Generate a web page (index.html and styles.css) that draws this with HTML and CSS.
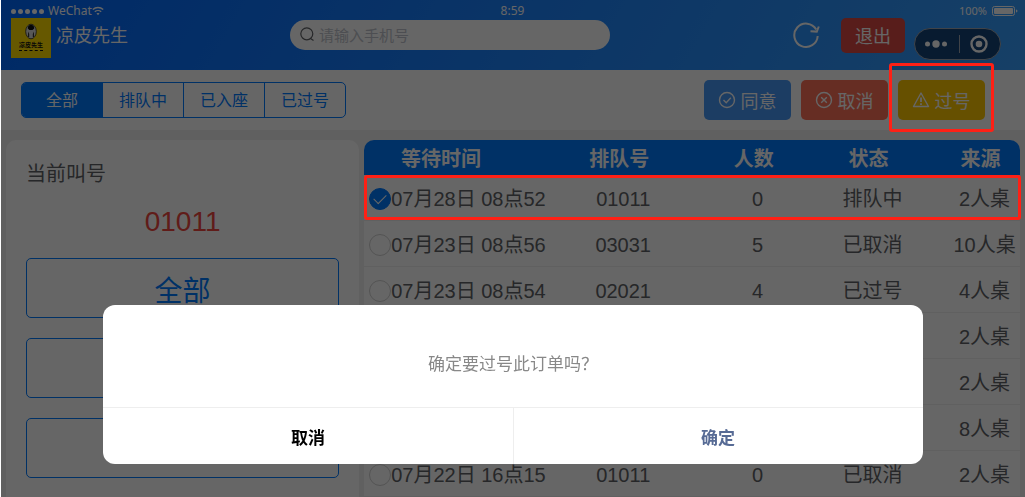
FILE: index.html
```
<!DOCTYPE html>
<html lang="zh-CN">
<head>
  <meta charset="UTF-8">
  <meta name="viewport" content="width=device-width, initial-scale=1.0">
  <title>凉皮先生</title>
  <link rel="stylesheet" href="styles.css">
</head>
<body>
  <header class="header">
    <div class="status-bar">
      <div class="carrier">
        <span class="signal"><i></i><i></i><i></i><i></i><i></i></span>
        <span>WeChat</span>
        <svg class="wifi" width="12" height="10" viewBox="0 0 12 10" fill="none" stroke="#fff" stroke-width="1.4">
          <path d="M0.8 3.6C3.8 0.8 8.2 0.8 11.2 3.6"/>
          <path d="M2.8 5.8C4.6 4.2 7.4 4.2 9.2 5.8"/>
          <path d="M4.5 7.4L6 9.2L7.5 7.4C6.6 6.8 5.4 6.8 4.5 7.4Z" fill="#fff" stroke="none"/>
        </svg>
      </div>
      <span class="clock">8:59</span>
      <div class="battery">
        <span>100%</span>
        <svg width="26" height="10" viewBox="0 0 26 10">
          <rect x="0.5" y="0.5" width="22" height="9" rx="2" fill="none" stroke="#fff"/>
          <rect x="2" y="2" width="19" height="6" rx="1" fill="#fff"/>
          <path d="M24 3.5C26 4 26 6 24 6.5Z" fill="#fff"/>
        </svg>
      </div>
    </div>

    <div class="navbar">
      <div class="brand">
        <div class="logo">
          <svg width="14" height="17" viewBox="0 0 14 17">
            <ellipse cx="7" cy="8.5" rx="5.3" ry="7.3" fill="#ddd" stroke="#111" stroke-width="0.7"/>
            <path d="M3.8 5.5C3.4 0.6 10.6 0.6 10.2 5.5L8.6 7H5.4Z" fill="#111"/>
            <path d="M4.2 8.5L5.2 11V14H4V11ZM9.8 8.5L8.8 11V14H10V11Z" fill="#333"/>
          </svg>
          <span class="logo-name">凉皮先生</span>
          <span class="logo-line"></span>
        </div>
        <span class="brand-name">凉皮先生</span>
      </div>
      <label class="search">
        <svg width="16" height="16" viewBox="0 0 16 16" fill="none" stroke="#606266" stroke-width="1.2">
          <circle cx="6.8" cy="6.8" r="6"/>
          <path d="M10.5 11.5L13.5 13.5"/>
        </svg>
        <input type="text" placeholder="请输入手机号" aria-label="请输入手机号">
      </label>
      <div class="nav-actions">
        <button class="refresh-btn" aria-label="刷新">
          <svg width="28" height="28" viewBox="0 0 28 28" fill="none" stroke="#fff" stroke-width="2">
            <path d="M23.2 7.5A11.7 11.7 0 1 0 24.7 14"/>
            <path d="M17.5 9.2L23.8 9.6L25.8 4.5"/>
          </svg>
        </button>
        <button class="exit-btn">退出</button>
      </div>
    </div>

    <div class="capsule">
      <svg width="24" height="10" viewBox="0 0 24 10" fill="#fff">
        <circle cx="3.5" cy="5" r="2.5"/>
        <circle cx="12" cy="5" r="3.7"/>
        <circle cx="20.5" cy="5" r="2.5"/>
      </svg>
      <span class="capsule-line"></span>
      <svg width="18" height="18" viewBox="0 0 18 18">
        <circle cx="9" cy="9" r="7.5" fill="none" stroke="#fff" stroke-width="2.4"/>
        <circle cx="9" cy="9" r="3.3" fill="#fff"/>
      </svg>
    </div>
  </header>

  <section class="toolbar">
    <div class="tabs">
      <button class="tab active">全部</button>
      <button class="tab">排队中</button>
      <button class="tab">已入座</button>
      <button class="tab">已过号</button>
    </div>
    <div class="actions">
      <button class="action agree">
        <svg width="18" height="18" viewBox="0 0 18 18" fill="none" stroke="#fff" stroke-width="1.4">
          <circle cx="9" cy="9" r="7.5"/>
          <path d="M5.5 9L8.2 11.7L12.8 6.8"/>
        </svg>
        同意
      </button>
      <button class="action cancel">
        <svg width="18" height="18" viewBox="0 0 18 18" fill="none" stroke="#fff" stroke-width="1.4">
          <circle cx="9" cy="9" r="7.5"/>
          <path d="M6.2 6.2L11.8 11.8M11.8 6.2L6.2 11.8"/>
        </svg>
        取消
      </button>
      <button class="action skip">
        <svg width="18" height="18" viewBox="0 0 18 18" fill="none" stroke="#fff" stroke-width="1.4" stroke-linejoin="round">
          <path d="M9 2L16.5 15.5H1.5Z"/>
          <path d="M9 6.5V11M9 12.3V14" stroke-width="1.8"/>
        </svg>
        过号
      </button>
    </div>
    <div class="mark mark-button"></div>
  </section>

  <main class="content">
    <aside class="panel">
      <h2>当前叫号</h2>
      <p class="current">01011</p>
      <div class="types">
        <button class="type-btn">全部</button>
        <button class="type-btn"></button>
        <button class="type-btn"></button>
      </div>
    </aside>

    <div class="queue">
      <table class="queue-table">
        <colgroup>
          <col class="col-time">
          <col class="col-number">
          <col class="col-people">
          <col class="col-state">
          <col class="col-source">
        </colgroup>
        <thead>
          <tr><th>等待时间</th><th>排队号</th><th>人数</th><th>状态</th><th>来源</th></tr>
        </thead>
        <tbody>
          <tr>
            <td><label><input type="radio" name="order" checked>07月28日 08点52</label></td>
            <td>01011</td><td>0</td><td>排队中</td><td>2人桌</td>
          </tr>
          <tr>
            <td><label><input type="radio" name="order">07月23日 08点56</label></td>
            <td>03031</td><td>5</td><td>已取消</td><td>10人桌</td>
          </tr>
          <tr>
            <td><label><input type="radio" name="order">07月23日 08点54</label></td>
            <td>02021</td><td>4</td><td>已过号</td><td>4人桌</td>
          </tr>
          <tr><td></td><td></td><td></td><td></td><td>2人桌</td></tr>
          <tr><td></td><td></td><td></td><td></td><td>2人桌</td></tr>
          <tr><td></td><td></td><td></td><td></td><td>8人桌</td></tr>
          <tr>
            <td><label><input type="radio" name="order">07月22日 16点15</label></td>
            <td>01011</td><td>0</td><td>已取消</td><td>2人桌</td>
          </tr>
        </tbody>
      </table>
      <div class="mark mark-row"></div>
    </div>
  </main>

  <div class="mask">
    <div class="modal" role="dialog" aria-modal="true" aria-labelledby="modalText">
      <p class="modal-text" id="modalText">确定要过号此订单吗？</p>
      <div class="modal-footer">
        <button class="modal-btn">取消</button>
        <button class="modal-btn confirm">确定</button>
      </div>
    </div>
  </div>
</body>
</html>
```
FILE: styles.css
```
* {
    box-sizing: border-box;
}
body {
    margin: 0;
    padding-left: 1px;
    min-height: 100vh;
    display: flex;
    flex-direction: column;
    font-family: "Liberation Sans", "Noto Sans CJK SC", sans-serif;
    color: #606266;
    background: linear-gradient(to right, #fff 1px, #f0f0f0 1px);
}
button {
    padding: 0;
    border: none;
    background: none;
    font-family: inherit;
    cursor: pointer;
}
h2, p {
    margin: 0;
}
svg {
    display: block;
    flex: none;
}

/* header */
.header {
    position: relative;
    height: 70px;
    color: #fff;
    background: linear-gradient(120deg, #0068ff, #38a0ff);
}
.status-bar {
    display: grid;
    grid-template-columns: 1fr auto 1fr;
    align-items: center;
    height: 18px;
    padding: 4px 7px 0 10px;
    font-family: "Noto Sans", sans-serif;
    font-size: 12px;
    line-height: 14px;
}
.clock {
    margin-right: 4px;
}
.carrier, .battery, .signal {
    display: flex;
    align-items: center;
}
.signal {
    gap: 2px;
    margin-right: 4px;
}
.signal i {
    width: 5px;
    height: 5px;
    border-radius: 50%;
    background-color: #fff;
}
.battery {
    justify-content: flex-end;
    gap: 5px;
    font-size: 11px;
}
.navbar {
    display: flex;
    align-items: flex-start;
    padding: 0 120px 0 10px;
}
.brand {
    display: flex;
    width: 279px;
}
.logo {
    display: flex;
    flex-direction: column;
    align-items: center;
    width: 40px;
    height: 40px;
    padding-top: 5px;
    background-color: #ffdc00;
    color: #111;
}
.logo-name {
    font-size: 6px;
    font-weight: bold;
    line-height: 10px;
}
.logo-line {
    width: 24px;
    border-top: 1px dashed #111;
}
.brand-name {
    margin-left: 5px;
    font-size: 18px;
    line-height: 36px;
}
.search {
    display: flex;
    align-items: center;
    width: 320px;
    height: 30px;
    margin-top: 2px;
    padding: 0 10px;
    border-radius: 15px;
    background-color: #fff;
}
.search input {
    flex: 1;
    min-width: 0;
    margin-left: 3px;
    padding: 0;
    border: none;
    outline: none;
    background: none;
    font-family: inherit;
    font-size: 15px;
}
.search input::placeholder {
    color: #c0c4cc;
}
.nav-actions {
    display: flex;
    align-items: center;
    gap: 20px;
    margin-left: auto;
}
.exit-btn {
    width: 64px;
    height: 35px;
    padding-bottom: 2px;
    border-radius: 5px;
    background-color: #dd4a44;
    color: #fff;
    font-size: 18px;
}
.capsule {
    position: absolute;
    top: 28px;
    right: 24px;
    display: flex;
    align-items: center;
    justify-content: space-between;
    width: 87px;
    height: 32px;
    padding: 0 12px 0 9px;
    border: 1px solid #a0a8b4;
    border-radius: 16px;
    background-color: #144478;
}
.capsule-line {
    height: 18px;
    border-left: 1px solid #a0a8b4;
}

/* tabs and actions */
.toolbar {
    position: relative;
    display: flex;
    align-items: center;
    justify-content: space-between;
    height: 60px;
    padding: 0 40px 0 20px;
    background-color: #fff;
}
.tabs {
    display: flex;
    width: 325px;
    height: 36px;
    border: 1px solid #007aff;
    border-radius: 5px;
    overflow: hidden;
}
.tab {
    flex: 1;
    padding-bottom: 2px;
    color: #007aff;
    font-size: 16px;
}
.tab + .tab {
    border-left: 1px solid #007aff;
}
.tab.active {
    background-color: #007aff;
    color: #fff;
}
.actions {
    display: flex;
    gap: 10px;
}
.action {
    display: flex;
    align-items: center;
    justify-content: center;
    gap: 5px;
    width: 87px;
    height: 40px;
    padding-right: 1px;
    padding-bottom: 1px;
    border-radius: 5px;
    color: #fff;
    font-size: 18px;
}
.agree {
    background-color: #4698f8;
}
.cancel {
    background-color: #ff7058;
}
.skip {
    background-color: #ffc800;
}

/* content */
.content {
    flex: 1;
    display: grid;
    grid-template-columns: 35fr 65fr;
    gap: 5px;
    padding: 10px 5px 0;
}
.panel {
    padding: 20px 20px 10px;
    border-radius: 10px 10px 0 0;
    background-color: #fff;
}
.panel h2 {
    font-size: 20px;
    font-weight: normal;
    line-height: 28px;
}
.current {
    padding: 14px 0 17px;
    color: #f04840;
    font-size: 28px;
    line-height: 39px;
    text-align: center;
}
.types {
    display: flex;
    flex-direction: column;
    gap: 20px;
}
.type-btn {
    height: 60px;
    padding-top: 2px;
    border: 1px solid #007aff;
    border-radius: 5px;
    color: #007aff;
    font-size: 28px;
}
.queue {
    position: relative;
    border-radius: 10px 10px 0 0;
    background-color: #fff;
}
.queue-table {
    width: 100%;
    table-layout: fixed;
    border-collapse: separate;
    border-spacing: 0;
    font-size: 20px;
}
.col-time { width: 30%; }
.col-number { width: 19%; }
.col-people { width: 22%; }
.col-state { width: 13%; }
.col-source { width: 16%; }
.queue-table th {
    height: 35px;
    padding: 2px 8px 0 0;
    background-color: #007aff;
    color: #fff;
    line-height: 30px;
}
.queue-table th:first-child {
    padding-right: 43px;
    border-top-left-radius: 10px;
}
.queue-table th:last-child {
    padding-left: 34px;
    border-top-right-radius: 10px;
}
.queue-table td {
    height: 46px;
    padding: 2px 0 0;
    border-bottom: 1px solid #f0f0f0;
    line-height: 30px;
    text-align: center;
    white-space: nowrap;
}
.queue-table td:first-child {
    padding-left: 5px;
}
.queue-table td:last-child {
    padding-left: 34px;
}
.queue-table label {
    display: flex;
    align-items: center;
}
.queue-table input {
    appearance: none;
    flex: none;
    display: grid;
    place-items: center;
    width: 22px;
    height: 22px;
    margin: 0;
    border: 1px solid #d1d1d1;
    border-radius: 50%;
}
.queue-table input:checked {
    border-color: #007aff;
    background-color: #007aff;
}
.queue-table input:checked::after {
    content: "";
    width: 11px;
    height: 6px;
    margin-bottom: 3px;
    border: solid #fff;
    border-width: 0 0 1px 1px;
    rotate: -45deg;
}

/* red frames stay above the mask */
.mark {
    position: absolute;
    z-index: 20;
    border: 3px solid #ff2015;
    border-radius: 3px;
    pointer-events: none;
}
.mark-button {
    top: -7px;
    right: 31px;
    width: 105px;
    height: 69px;
}
.mark-row {
    top: 35px;
    left: 0;
    right: -1px;
    height: 45px;
}

/* modal */
.mask {
    position: fixed;
    inset: 0 0 0 1px;
    z-index: 10;
    padding-top: 305px;
    background-color: rgba(0, 0, 0, 0.6);
}
.modal {
    width: 80%;
    margin: 0 auto;
    border-radius: 12px;
    background-color: #fff;
    overflow: hidden;
}
.modal-text {
    padding: 48px 24px 30px;
    color: #888;
    font-size: 17px;
    line-height: 24px;
    text-align: center;
}
.modal-footer {
    display: flex;
    border-top: 1px solid #eee;
}
.modal-btn {
    flex: 1;
    height: 56px;
    color: #000;
    font-size: 17px;
    font-weight: bold;
}
.modal-btn.confirm {
    border-left: 1px solid #eee;
    color: #576b95;
}
```
